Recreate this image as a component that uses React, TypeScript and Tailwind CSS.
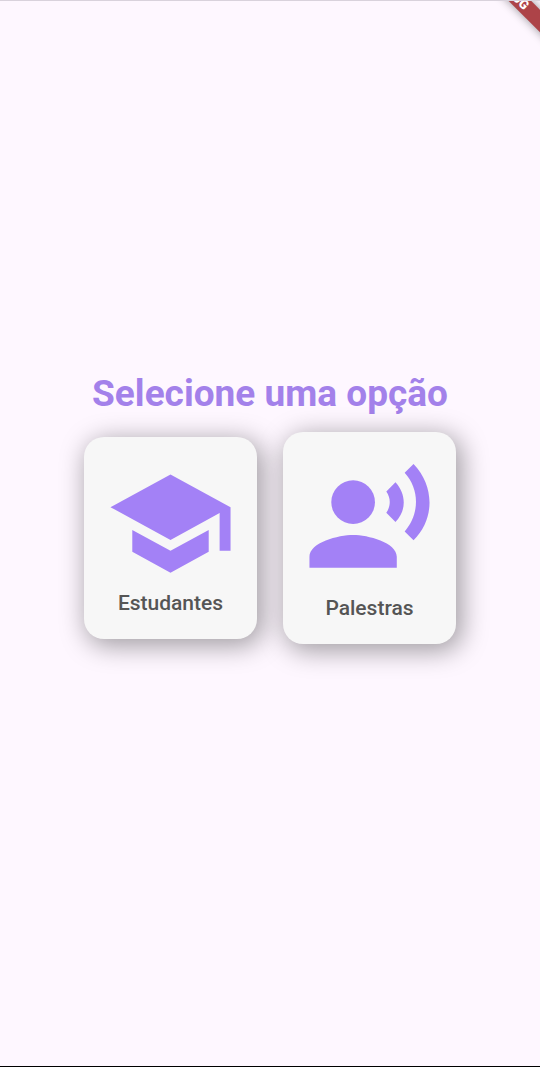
import type { ReactNode } from "react";

type OptionCardProps = { label: string; spaced?: boolean; children: ReactNode };

function OptionCard({ label, spaced, children }: OptionCardProps) {
  return (
    <button
      type="button"
      className={`flex flex-col items-center rounded-[20px] bg-[#f7f7f7] p-[21px] shadow-[4px_5px_26px_2px_rgba(0,0,0,0.37)] ${spaced ? "gap-2.5" : ""}`}
    >
      <svg viewBox="0 0 24 24" className="size-[131px] fill-[#a381f6]" aria-hidden="true">
        {children}
      </svg>
      <span className="text-[21px] leading-[29px] font-medium text-[#555555]">{label}</span>
    </button>
  );
}

function DebugBanner() {
  return (
    <div className="pointer-events-none absolute top-0 right-0 size-20 overflow-hidden" aria-hidden="true">
      <div className="absolute -top-4 -right-13 w-40 rotate-45 bg-[#ad4348] text-center text-[13px] leading-4 font-black text-white shadow-[0_0_10px_rgba(0,0,0,0.4)]">
        DEBUG
      </div>
    </div>
  );
}

export default function App() {
  return (
    <main className="relative flex min-h-screen flex-col items-center justify-center overflow-hidden border-t border-b border-t-[#d9d2dc] border-b-black bg-[#fef7ff] pb-[52px] font-[Roboto,sans-serif]">
      <DebugBanner />
      <h1 className="mb-4 text-center text-[37px] leading-[45px] font-bold text-[#a381ea]">
        Selecione uma opção
      </h1>
      <div className="flex items-center justify-center gap-[26px]">
        <OptionCard label="Estudantes">
          <path d="M5 13.18v4L12 21l7-3.82v-4L12 17l-7-3.82zM12 3 1 9l11 6 9-4.91V17h2V9L12 3z" />
        </OptionCard>
        <OptionCard label="Palestras" spaced>
          <circle cx="9" cy="9" r="4" />
          <path d="M9 15c-2.67 0-8 1.34-8 4v2h16v-2c0-2.66-5.33-4-8-4zm7.76-9.64-1.68 1.69c.84 1.18.84 2.71 0 3.89l1.68 1.69c2.02-2.02 2.02-5.07 0-7.27zM20.07 2l-1.63 1.63c2.77 3.02 2.77 7.56 0 10.74L20.07 16c3.9-3.89 3.91-9.95 0-14z" />
        </OptionCard>
      </div>
    </main>
  );
}
